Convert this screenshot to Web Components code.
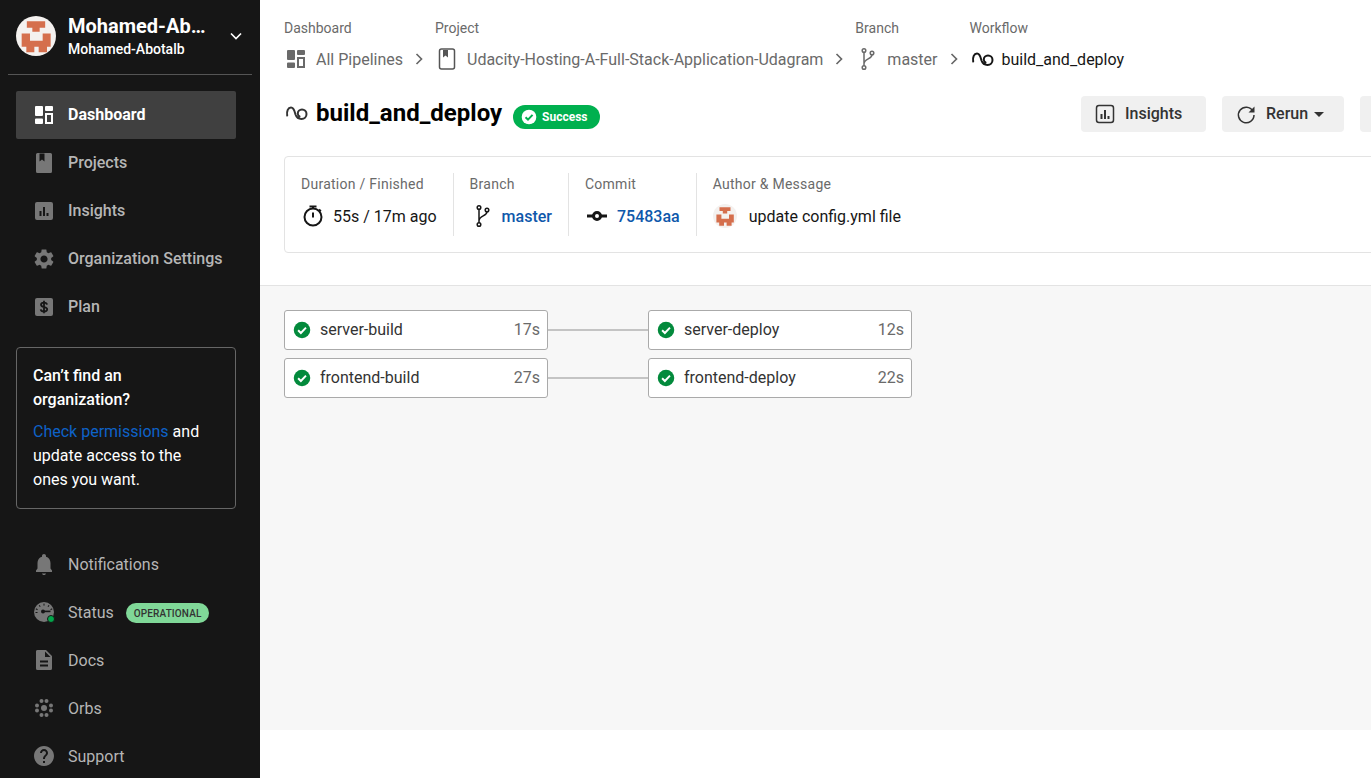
<!DOCTYPE html>
<html lang="en">
<head>
<meta charset="utf-8">
<title>build_and_deploy</title>
<style>
  html, body { margin: 0; height: 100%; overflow: hidden; background: #fff; }
  body { font-family: Roboto, "Liberation Sans", sans-serif; }
</style>
</head>
<body>
<app-shell>
  <side-bar slot="side">
    <nav-item icon="dashboard" active>Dashboard</nav-item>
    <nav-item icon="book" strong>Projects</nav-item>
    <nav-item icon="insights" strong>Insights</nav-item>
    <nav-item icon="gear" strong>Organization Settings</nav-item>
    <nav-item icon="plan" strong>Plan</nav-item>
    <org-card slot="card"></org-card>
    <nav-item slot="foot" icon="bell">Notifications</nav-item>
    <nav-item slot="foot" icon="gauge">Status<status-tag>OPERATIONAL</status-tag></nav-item>
    <nav-item slot="foot" icon="doc">Docs</nav-item>
    <nav-item slot="foot" icon="orbs">Orbs</nav-item>
    <nav-item slot="foot" icon="help">Support</nav-item>
  </side-bar>

  <workflow-head>
    <crumb-item slot="crumbs" label="Dashboard" icon="dashboard">All Pipelines</crumb-item>
    <crumb-item slot="crumbs" label="Project" icon="bookline" sep>Udacity-Hosting-A-Full-Stack-Application-Udagram</crumb-item>
    <crumb-item slot="crumbs" label="Branch" icon="branch" sep>master</crumb-item>
    <crumb-item slot="crumbs" label="Workflow" icon="workflow" sep current>build_and_deploy</crumb-item>

    <action-btn slot="actions" icon="insightsline">Insights</action-btn>
    <action-btn slot="actions" icon="rerun" caret>Rerun</action-btn>
    <action-btn slot="actions" blank></action-btn>

    <info-cell slot="info" label="Duration / Finished" icon="timer">55s / 17m ago</info-cell>
    <info-cell slot="info" label="Branch" icon="branch" link>master</info-cell>
    <info-cell slot="info" label="Commit" icon="commit" link>75483aa</info-cell>
    <info-cell slot="info" label="Author &amp; Message" icon="avatar" last>update config.yml file</info-cell>
  </workflow-head>

  <job-graph>
    <job-row>
      <job-box slot="from" name="server-build" time="17s"></job-box>
      <job-box slot="to" name="server-deploy" time="12s"></job-box>
    </job-row>
    <job-row>
      <job-box slot="from" name="frontend-build" time="27s"></job-box>
      <job-box slot="to" name="frontend-deploy" time="22s"></job-box>
    </job-row>
  </job-graph>
</app-shell>

<script>
const AVATAR_PATHS = `
  <circle cx="12" cy="12" r="12" fill="#f4f1ef"/>
  <path fill="#d56f4d" d="M6.500 3.200h11V7h-3.300v2.500H9.800V7H6.500z"/>
  <path fill="#d56f4d" d="M3.400 10.500h5v4.300H16v-4.300h4.800v8h-2.200v3.300h-5v-3.300h-2.600v3.300h-4.800v-3.300H3.400z"/>`;

const ICONS = {
  dashboard: '<path fill="currentColor" d="M4 3h6a1 1 0 0 1 1 1v8a1 1 0 0 1-1 1H4a1 1 0 0 1-1-1V4a1 1 0 0 1 1-1zM14 3h6a1 1 0 0 1 1 1v3a1 1 0 0 1-1 1h-6a1 1 0 0 1-1-1V4a1 1 0 0 1 1-1zM4 15.500h6a1 1 0 0 1 1 1V20a1 1 0 0 1-1 1H4a1 1 0 0 1-1-1v-3.500a1 1 0 0 1 1-1z"/><path fill="none" stroke="currentColor" stroke-width="2" d="M14 11h6v9h-6z"/>',
  book: '<path fill="currentColor" fill-rule="evenodd" d="M5.500 2h13A1.500 1.500 0 0 1 20 3.500v17a1.500 1.500 0 0 1-1.500 1.500h-13A1.500 1.500 0 0 1 4 20.500v-17A1.500 1.500 0 0 1 5.500 2zM7.500 2.500v8l2.500-2 2.500 2v-8z"/>',
  bookline: '<rect x="4.500" y="2" width="15" height="20" rx="2" fill="none" stroke="#555" stroke-width="1.500"/><path fill="#555" d="M8 3h5v7.500l-2.500-2-2.500 2z"/>',
  insights: '<path fill="currentColor" fill-rule="evenodd" d="M5 3h14a2 2 0 0 1 2 2v14a2 2 0 0 1-2 2H5a2 2 0 0 1-2-2V5a2 2 0 0 1 2-2zM7.500 12v5h2v-5zM11 8v9h2V8zM14.500 14v3h2v-3z"/>',
  insightsline: '<rect x="3.500" y="3.500" width="17" height="17" rx="2.500" fill="none" stroke="currentColor" stroke-width="1.500"/><path fill="currentColor" d="M7.500 12h2v5h-2zM11 8h2v9h-2zM14.500 14h2v3h-2z"/>',
  gear: '<path fill="currentColor" d="M19.140 12.940c.04-.3.06-.61.06-.94 0-.32-.02-.64-.07-.94l2.030-1.580c.18-.14.23-.41.12-.61l-1.920-3.320c-.12-.22-.37-.29-.59-.22l-2.390.96c-.5-.38-1.030-.7-1.620-.94l-.36-2.540c-.04-.24-.24-.41-.48-.41h-3.840c-.24 0-.43.17-.47.41l-.36 2.540c-.59.24-1.130.57-1.620.94l-2.390-.96c-.22-.08-.47 0-.59.22L2.740 8.870c-.12.21-.08.47.12.61l2.030 1.580c-.05.3-.09.63-.09.94s.02.64.07.94l-2.030 1.580c-.18.14-.23.41-.12.61l1.920 3.320c.12.22.37.29.59.22l2.390-.96c.5.38 1.030.7 1.620.94l.36 2.540c.05.24.24.41.48.41h3.840c.24 0 .44-.17.47-.41l.36-2.540c.59-.24 1.130-.56 1.620-.94l2.390.96c.22.08.47 0 .59-.22l1.920-3.320c.12-.22.07-.47-.12-.61l-2.010-1.580zM12 15.600c-1.980 0-3.600-1.620-3.600-3.600s1.620-3.600 3.600-3.600 3.600 1.620 3.600 3.600-1.620 3.600-3.600 3.600z"/>',
  plan: '<rect x="3" y="3" width="18" height="18" rx="2" fill="currentColor"/><path fill="none" stroke="#161616" stroke-width="1.800" d="M15 9.600c-.2-1.300-1.400-2-3-2-1.700 0-3 .8-3 2.200 0 3.200 6.200 1.400 6.200 4.500 0 1.400-1.400 2.200-3.200 2.200s-3.100-.8-3.300-2.200M12 5.800v12.400"/>',
  bell: '<path fill="currentColor" d="M12 23c1.100 0 2-.7 2-1.500h-4c0 .8.900 1.500 2 1.500zm6.500-6.500v-5.500c0-3.070-1.630-5.640-4.500-6.320V4c0-1.100-.9-2-2-2s-2 .9-2 2v.68C7.140 5.360 5.500 7.920 5.500 11v5.500L4 18.500v1.500h16v-1.500z"/>',
  gauge: '<path fill="currentColor" fill-rule="evenodd" d="M12 2a10 10 0 1 1 0 20 10 10 0 0 1 0-20z"/><g fill="#161616"><rect x="11.500" y="3.600" width="1" height="2"/><rect x="7.200" y="5" width="1" height="2" transform="rotate(-30 7.700 6)"/><rect x="16" y="5" width="1" height="2" transform="rotate(30 16.500 6)"/><rect x="4.200" y="8.300" width="1" height="2" transform="rotate(-60 4.700 9.300)"/><rect x="18.900" y="8.300" width="1" height="2" transform="rotate(60 19.400 9.300)"/><rect x="3.500" y="12" width="2" height="1"/><rect x="10" y="10.600" width="8.500" height="1.600"/><circle cx="11" cy="11.400" r="2"/></g><circle cx="19" cy="19" r="3.500" fill="#02a64a" stroke="#161616" stroke-width="1"/>',
  doc: '<path fill="currentColor" fill-rule="evenodd" d="M6 2h8l6 6v12.500a1.500 1.500 0 0 1-1.500 1.500h-13A1.500 1.500 0 0 1 4 20.500v-17A1.500 1.500 0 0 1 6 2zM13 3.500V9h5.500zM8 12.500v2h8v-2zM8 16.500v2h8v-2z"/>',
  orbs: '<g fill="currentColor"><circle cx="12" cy="12" r="3"/><circle cx="9.500" cy="5" r="2"/><circle cx="14.500" cy="5" r="2"/><circle cx="5" cy="9.500" r="2"/><circle cx="19" cy="9.500" r="2"/><circle cx="5" cy="14.500" r="2"/><circle cx="19" cy="14.500" r="2"/><circle cx="9.500" cy="19" r="2"/><circle cx="14.500" cy="19" r="2"/></g>',
  help: '<path fill="currentColor" d="M12 2C6.480 2 2 6.480 2 12s4.480 10 10 10 10-4.480 10-10S17.520 2 12 2zm1 17h-2v-2h2v2zm2.070-7.750l-.9.920C13.450 12.900 13 13.500 13 15h-2v-.5c0-1.100.45-2.100 1.170-2.830l1.240-1.260c.37-.36.59-.86.59-1.410 0-1.100-.9-2-2-2s-2 .9-2 2H8c0-2.210 1.790-4 4-4s4 1.790 4 4c0 .88-.36 1.680-.93 2.250z"/>',
  chevron: '<path fill="none" stroke="currentColor" stroke-width="2" d="M9 6l6 6-6 6"/>',
  down: '<path fill="none" stroke="currentColor" stroke-width="2" d="M6 9l6 6 6-6"/>',
  branch: '<g fill="none" stroke="currentColor" stroke-width="1.500"><circle cx="9" cy="3.500" r="1.800"/><circle cx="9" cy="20.500" r="1.800"/><circle cx="17" cy="6" r="1.800"/><path d="M9 5.300v13.400M17 7.800c0 4.200-8 4.200-8 9"/></g>',
  workflow: '<path fill="none" stroke="currentColor" stroke-width="2" stroke-linecap="round" d="M3.200 14.500C2.500 10 4 6.500 7 6.500c3 0 3.500 3.500 4.500 7 1 3 3 4.500 6 4.500 3 0 5-2.200 5-5 0-2.500-2-4.500-4.500-4.500-2.500 0-4.200 2-4.200 4 0 1.500.7 2.500 1.700 3"/>',
  timer: '<g fill="none" stroke="currentColor" stroke-width="2"><circle cx="12" cy="13" r="8.500"/><path d="M8.500 2.500h7M12 2.500v2M12 8.500V13.500M18 5.500l1.800 1.800"/></g>',
  commit: '<circle cx="12" cy="12" r="3.500" fill="none" stroke="currentColor" stroke-width="3"/><path stroke="currentColor" stroke-width="3" d="M2 12h6.500M15.500 12H22"/>',
  rerun: '<path fill="none" stroke="currentColor" stroke-width="1.500" d="M18.900 9A7.800 7.800 0 1 0 20 13"/><path fill="currentColor" d="M20.500 4.500v6h-6z"/>',
  check: '<circle cx="12" cy="12" r="11" fill="currentColor"/><path fill="none" stroke="#fff" stroke-width="2.600" d="M6.800 12.300l3.700 3.700 6.800-7.200"/>',
  avatar: AVATAR_PATHS
};

class CcIcon extends HTMLElement {
  connectedCallback() {
    const size = this.getAttribute('size') || 24;
    const name = this.getAttribute('name');
    this.attachShadow({ mode: 'open' });
    this.shadowRoot.innerHTML = `
      <style>
        :host { display: inline-flex; flex: none; width: ${size}px; height: ${size}px; }
        svg { display: block; width: 100%; height: 100%; }
      </style>
      <svg viewBox="0 0 24 24" aria-hidden="true">${ICONS[name] || ''}</svg>
    `;
  }
}

class AppShell extends HTMLElement {
  constructor() {
    super();
    this.attachShadow({ mode: 'open' });
    this.shadowRoot.innerHTML = `
      <style>
        :host { display: flex; height: 778px; width: 1371px; overflow: hidden; font-family: Roboto, "Liberation Sans", sans-serif; }
        ::slotted([slot="side"]) { flex: none; }
        .main { flex: 1; min-width: 0; overflow: hidden; }
      </style>
      <slot name="side"></slot>
      <div class="main"><slot></slot></div>
    `;
  }
}

class SideBar extends HTMLElement {
  constructor() {
    super();
    this.attachShadow({ mode: 'open' });
    this.shadowRoot.innerHTML = `
      <style>
        :host { display: block; width: 260px; height: 778px; overflow: hidden; background: #161616; color: #fff; }
        .org { display: flex; align-items: center; height: 75px; margin: 0 8px; padding: 0 8px 2px; box-sizing: border-box; border-bottom: 1px solid #555; }
        .logo { width: 40px; height: 40px; flex: none; margin-right: 12px; }
        .names { width: 138px; flex: none; }
        .name { font-size: 20px; line-height: 24px; font-weight: 700; white-space: nowrap; }
        .sub { font-size: 14px; line-height: 20px; font-weight: 500; margin-top: 1px; }
        .toggle { margin-left: 20px; color: #fff; }
        .nav { padding: 16px 24px 0 16px; }
        .foot { padding: 31px 16px 0; }
        ::slotted([slot="card"]) { margin-top: 16px; }
      </style>
      <div class="org">
        <cc-icon class="logo" name="avatar" size="40"></cc-icon>
        <div class="names">
          <div class="name">Mohamed-Ab\u2026</div>
          <div class="sub">Mohamed-Abotalb</div>
        </div>
        <cc-icon class="toggle" name="down" size="20"></cc-icon>
      </div>
      <div class="nav">
        <slot></slot>
        <slot name="card"></slot>
      </div>
      <div class="foot"><slot name="foot"></slot></div>
    `;
  }
}

class NavItem extends HTMLElement {
  connectedCallback() {
    const icon = this.getAttribute('icon');
    this.attachShadow({ mode: 'open' });
    this.shadowRoot.innerHTML = `
      <style>
        :host { display: flex; align-items: center; height: 48px; padding-left: 16px; border-radius: 2px; font-size: 16px; color: #b5b5b5; }
        :host([strong]) { font-weight: 500; }
        :host([active]) { background: #404040; color: #fff; font-weight: 700; }
        .ico { color: #777; margin-right: 12px; }
        :host([active]) .ico { color: #fff; }
        .label { display: flex; align-items: center; }
        :host([strong]) .label, :host([active]) .label { margin-bottom: 2px; }
      </style>
      <cc-icon class="ico" name="${icon}"></cc-icon>
      <span class="label"><slot></slot></span>
    `;
  }
}

class StatusTag extends HTMLElement {
  constructor() {
    super();
    this.attachShadow({ mode: 'open' });
    this.shadowRoot.innerHTML = `
      <style>
        :host { display: inline-flex; align-items: center; height: 20px; margin: 2px 0 0 12px; padding: 0 8px; border-radius: 10px; background: #80d898; color: #333; font-size: 10px; font-weight: 500; letter-spacing: .13px; }
      </style>
      <slot></slot>
    `;
  }
}

class OrgCard extends HTMLElement {
  constructor() {
    super();
    this.attachShadow({ mode: 'open' });
    this.shadowRoot.innerHTML = `
      <style>
        :host { display: block; box-sizing: border-box; height: 162px; padding: 16px; border: 1px solid #666; border-radius: 4px; color: #fff; font-size: 16px; line-height: 24px; }
        .title { font-weight: 500; margin-bottom: 8px; }
        .gap { display: flex; gap: 4px; }
        a { color: #0e62c8; text-decoration: none; }
      </style>
      <div class="title">Can\u2019t find an organization?</div>
      <div class="gap"><a href="#">Check permissions</a><span>and</span></div>
      <div>update access to the</div>
      <div>ones you want.</div>
    `;
  }
}

class CrumbItem extends HTMLElement {
  connectedCallback() {
    const label = this.getAttribute('label');
    const icon = this.getAttribute('icon');
    this.attachShadow({ mode: 'open' });
    this.shadowRoot.innerHTML = `
      <style>
        :host { display: flex; align-items: flex-end; color: #6a6a6a; white-space: nowrap; }
        :host([current]) { color: #161616; }
        .sep { width: 32px; height: 24px; display: flex; justify-content: center; color: #666; }
        .label { font-size: 14px; line-height: 20px; margin-bottom: 9px; color: #6a6a6a; }
        .value { display: flex; align-items: center; gap: 8px; height: 24px; font-size: 16px; }
      </style>
      ${this.hasAttribute('sep') ? '<div class="sep"><cc-icon name="chevron" size="20" style="margin-top:2px"></cc-icon></div>' : ''}
      <div>
        <div class="label">${label}</div>
        <div class="value"><cc-icon name="${icon}"></cc-icon><slot></slot></div>
      </div>
    `;
  }
}

class ActionBtn extends HTMLElement {
  connectedCallback() {
    const icon = this.getAttribute('icon');
    this.attachShadow({ mode: 'open' });
    this.shadowRoot.innerHTML = `
      <style>
        :host { display: inline-flex; align-items: center; gap: 8px; box-sizing: border-box; width: 125px; height: 36px; padding-left: 12px; background: #f0f0f0; border-radius: 4px; color: #333; font-size: 16px; font-weight: 500; white-space: nowrap; }
        :host([caret]) { width: 122px; }
        :host([blank]) { width: 100px; padding: 0; }
        .text { margin-bottom: 2px; }
        .caret { width: 0; height: 0; border: 5px solid transparent; border-top-color: #333; border-bottom: 0; margin-left: -2px; }
      </style>
      ${icon ? `<cc-icon name="${icon}"></cc-icon>` : ''}
      <span class="text"><slot></slot></span>
      ${this.hasAttribute('caret') ? '<span class="caret"></span>' : ''}
    `;
  }
}

class InfoCell extends HTMLElement {
  connectedCallback() {
    const label = this.getAttribute('label');
    const icon = this.getAttribute('icon');
    this.attachShadow({ mode: 'open' });
    this.shadowRoot.innerHTML = `
      <style>
        :host { display: block; padding-right: 16px; margin-right: 16px; border-right: 1px solid #e3e3e3; white-space: nowrap; }
        :host([last]) { border-right: 0; }
        .label { font-size: 14px; line-height: 22px; color: #6a6a6a; margin-bottom: 9px; letter-spacing: .26px; }
        .value { display: flex; align-items: center; gap: 8px; height: 24px; padding-bottom: 8px; font-size: 16px; color: #161616; }
        :host([last]) .value { gap: 12px; }
        :host([link]) .text { color: #0e58ab; font-weight: 500; }
      </style>
      <div class="label">${label}</div>
      <div class="value"><cc-icon name="${icon}"></cc-icon><span class="text"><slot></slot></span></div>
    `;
  }
}

class WorkflowHead extends HTMLElement {
  constructor() {
    super();
    this.attachShadow({ mode: 'open' });
    this.shadowRoot.innerHTML = `
      <style>
        :host { display: block; box-sizing: border-box; width: 1224px; height: 286px; padding: 18px 24px 0; border-bottom: 1px solid #e3e3e3; background: #fff; }
        .crumbs { display: flex; align-items: flex-end; }
        .title-row { display: flex; align-items: center; height: 36px; margin-top: 25px; }
        .title-icon { color: #333; margin-right: 8px; margin-bottom: 2px; }
        h1 { margin: 0 11px 2px 0; font-size: 24px; line-height: 32px; font-weight: 700; color: #000; }
        .pill { display: inline-flex; align-items: center; gap: 5px; height: 24px; margin-top: 6px; padding: 0 12px 0 8px; border-radius: 12px; background: #00b04f; color: #fff; font-size: 12px; font-weight: 700; }
        .actions { display: flex; gap: 16px; margin-left: auto; }
        .card { display: flex; box-sizing: border-box; height: 97px; margin-top: 24px; padding: 16px; border: 1px solid #e3e3e3; border-radius: 4px; }
      </style>
      <div class="crumbs"><slot name="crumbs"></slot></div>
      <div class="title-row">
        <cc-icon class="title-icon" name="workflow"></cc-icon>
        <h1>build_and_deploy</h1>
        <span class="pill"><svg width="16" height="16" viewBox="0 0 24 24" aria-hidden="true"><circle cx="12" cy="12" r="11" fill="#fff"/><path fill="none" stroke="#00b04f" stroke-width="3" d="M6.800 12.300l3.700 3.700 6.800-7.200"/></svg>Success</span>
        <div class="actions"><slot name="actions"></slot></div>
      </div>
      <div class="card"><slot name="info"></slot></div>
    `;
  }
}

class JobGraph extends HTMLElement {
  constructor() {
    super();
    this.attachShadow({ mode: 'open' });
    this.shadowRoot.innerHTML = `
      <style>
        :host { display: flex; flex-direction: column; gap: 8px; box-sizing: border-box; height: 444px; padding: 24px; background: #f7f7f7; }
      </style>
      <slot></slot>
    `;
  }
}

class JobRow extends HTMLElement {
  constructor() {
    super();
    this.attachShadow({ mode: 'open' });
    this.shadowRoot.innerHTML = `
      <style>
        :host { display: flex; align-items: center; }
        .line { width: 100px; height: 2px; background: #c4c4c4; }
      </style>
      <slot name="from"></slot>
      <div class="line"></div>
      <slot name="to"></slot>
    `;
  }
}

class JobBox extends HTMLElement {
  connectedCallback() {
    this.attachShadow({ mode: 'open' });
    this.shadowRoot.innerHTML = `
      <style>
        :host { display: flex; align-items: center; box-sizing: border-box; width: 264px; height: 40px; padding: 0 7px 0 8px; background: #fff; border: 1px solid #aaa; border-radius: 3px; font-size: 16px; color: #333; }
        .ok { color: #038a3c; margin-right: 9px; }
        span { margin-bottom: 2px; }
        .time { margin-left: auto; color: #6a6a6a; }
      </style>
      <cc-icon class="ok" name="check" size="18"></cc-icon>
      <span>${this.getAttribute('name')}</span>
      <span class="time">${this.getAttribute('time')}</span>
    `;
  }
}

customElements.define('cc-icon', CcIcon);
customElements.define('app-shell', AppShell);
customElements.define('side-bar', SideBar);
customElements.define('nav-item', NavItem);
customElements.define('status-tag', StatusTag);
customElements.define('org-card', OrgCard);
customElements.define('crumb-item', CrumbItem);
customElements.define('action-btn', ActionBtn);
customElements.define('info-cell', InfoCell);
customElements.define('workflow-head', WorkflowHead);
customElements.define('job-graph', JobGraph);
customElements.define('job-row', JobRow);
customElements.define('job-box', JobBox);
</script>
</body>
</html>
